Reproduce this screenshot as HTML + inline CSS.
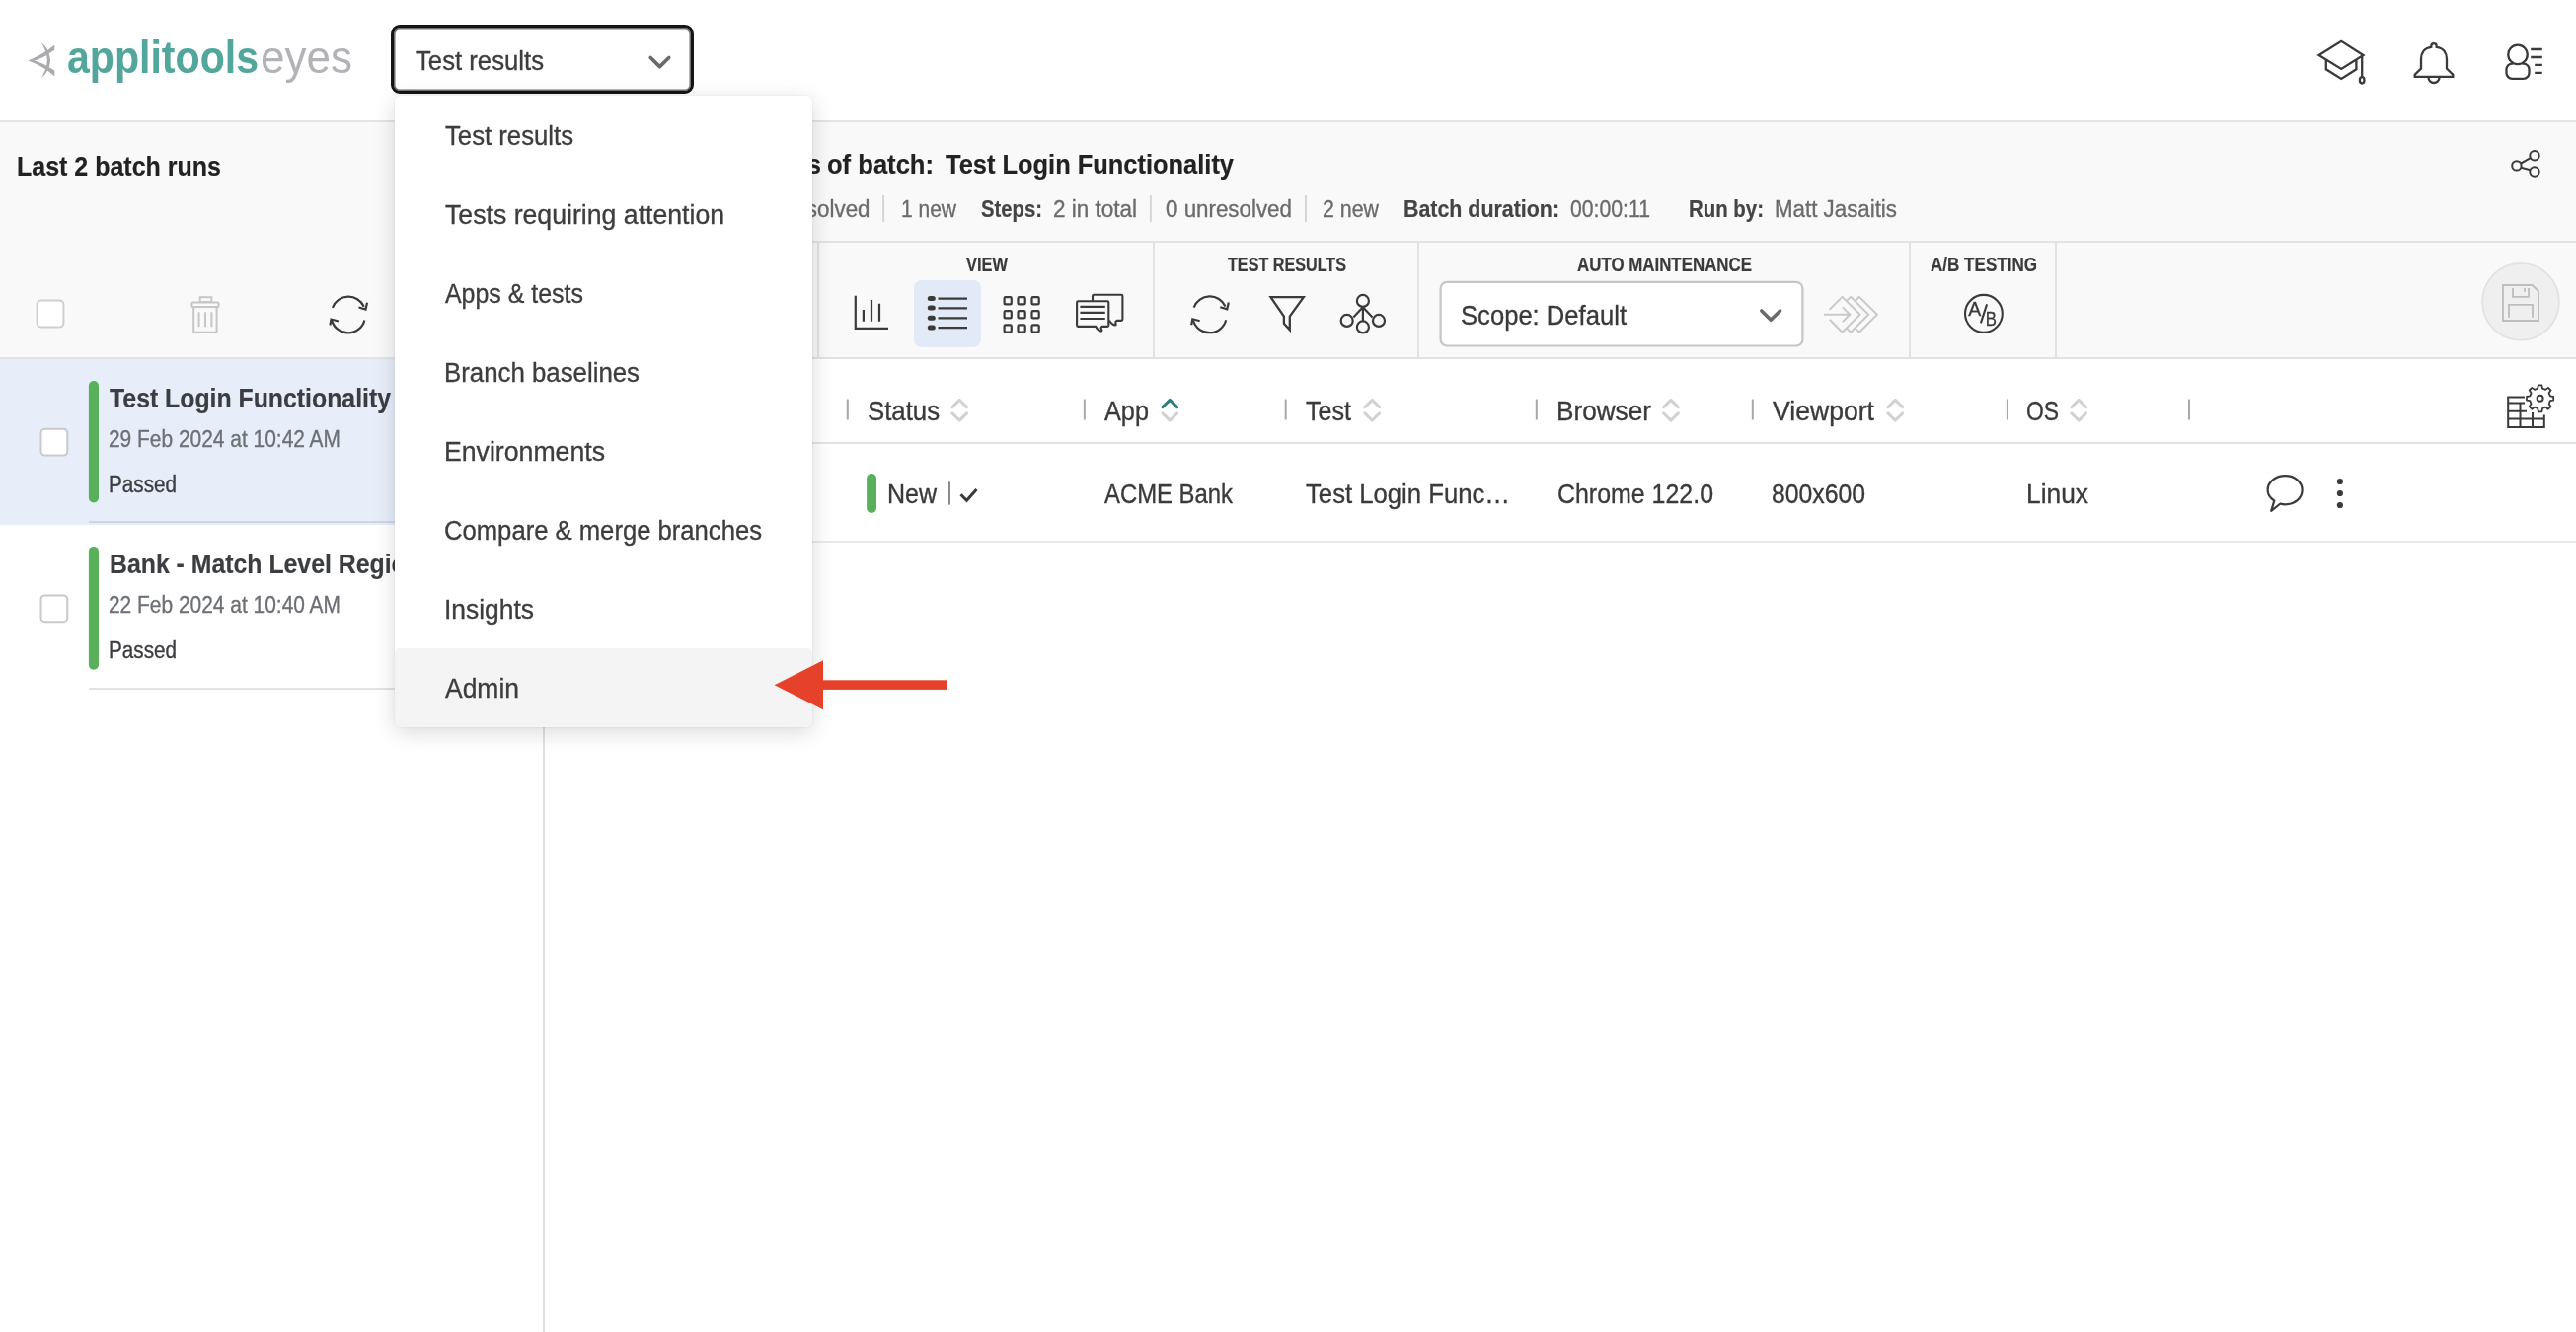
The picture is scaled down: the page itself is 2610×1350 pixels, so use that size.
<!DOCTYPE html>
<html><head><meta charset="utf-8"><title>Applitools Eyes</title>
<style>
html,body{margin:0;padding:0;}
body{width:2610px;height:1350px;position:relative;overflow:hidden;background:#fff;font-family:"Liberation Sans",sans-serif;}
.a{position:absolute;}
svg.full{position:absolute;left:0;top:0;width:2610px;height:1350px;will-change:transform;font-family:"Liberation Sans",sans-serif;}
</style></head><body>
<!-- header -->
<div class="a" style="left:0;top:0;width:2610px;height:122px;background:#fff"></div>
<div class="a" style="left:0;top:122px;width:2610px;height:2px;background:#e3e3e3"></div>
<!-- left panel -->
<div class="a" style="left:0;top:124px;width:550px;height:238px;background:#f9f9f9"></div>
<div class="a" style="left:0;top:362px;width:550px;height:2px;background:#e2e2e2"></div>
<div class="a" style="left:0;top:364px;width:550px;height:168px;background:#e7eefa"></div>
<div class="a" style="left:90px;top:528px;width:460px;height:2px;background:#cfd6e2"></div>
<div class="a" style="left:90px;top:697px;width:460px;height:2px;background:#e2e2e2"></div>
<div class="a" style="left:550px;top:124px;width:2px;height:1226px;background:#e0e0e0"></div>
<!-- main header -->
<div class="a" style="left:552px;top:124px;width:2058px;height:238px;background:#f9f9f9"></div>
<div class="a" style="left:552px;top:244px;width:2058px;height:2px;background:#e2e2e2"></div>
<div class="a" style="left:552px;top:362px;width:2058px;height:2px;background:#e2e2e2"></div>
<div class="a" style="left:828px;top:246px;width:2px;height:116px;background:#e2e2e2"></div>
<div class="a" style="left:1168px;top:246px;width:2px;height:116px;background:#e2e2e2"></div>
<div class="a" style="left:1436px;top:246px;width:2px;height:116px;background:#e2e2e2"></div>
<div class="a" style="left:1934px;top:246px;width:2px;height:116px;background:#e2e2e2"></div>
<div class="a" style="left:2082px;top:246px;width:2px;height:116px;background:#e2e2e2"></div>
<div class="a" style="left:926px;top:284px;width:68px;height:68px;border-radius:8px;background:#e3eaf7"></div>
<!-- table -->
<div class="a" style="left:552px;top:448px;width:2058px;height:2px;background:#e4e4e4"></div>
<div class="a" style="left:552px;top:548px;width:2058px;height:2px;background:#e9e9e9"></div>
<!-- dropdown button -->
<div class="a" style="left:396px;top:25px;width:301px;height:64px;border:3px solid #151515;border-radius:9px;background:#fff;box-shadow:inset 0 0 0 1.5px #6f6f6f"></div>
<svg class="full">

<!-- logo mark -->
<g fill="#a9abaf">
 <path d="M28.3,61.4 C35,58.5 42,55.5 48,51 C51,48.5 53.5,47 55.3,45.4 L55.3,50.8 C52,53 49,55 46.5,56.5 C42,59 38,60.6 34.8,61.4 C38.5,62.3 42.5,64 46.5,66.3 C49.5,68 52.5,70 55.3,71.4 L55.3,77.3 C53,75.5 50.5,73.5 48,71.5 C42,67 35,64 28.3,61.4 Z"/>
 <path d="M41.8,43 C46,46.5 50.5,52 51,61.2 C50.5,70.5 46,75.5 41.8,79.2 C44.5,74.5 47.5,69 47.8,61.2 C47.5,53.5 44.5,48 41.8,43 Z"/>
</g>
<!-- button chevron -->
<path d="M659.2,58.5 L668.5,67.6 L677.8,58.5" fill="none" stroke="#6a6a6a" stroke-width="3.6" stroke-linecap="round" stroke-linejoin="round"/>
<!-- grad cap -->
<g fill="none" stroke="#3a3a3a" stroke-width="2.3" stroke-linejoin="miter">
 <path d="M2349.5,56 L2372.2,41.8 L2394.5,56 L2372.2,69.9 Z"/>
 <path d="M2356.8,61 V70.3 L2372.2,79.9 L2387.4,70.3 V61"/>
 <path d="M2393.2,56.5 V77.5"/>
 <ellipse cx="2393.2" cy="81.3" rx="2.3" ry="3.2"/>
</g>
<!-- bell -->
<g fill="none" stroke="#3a3a3a" stroke-width="2.3" stroke-linejoin="miter">
 <path d="M2463.3,47.8 V46.9 A2.7,2.7 0 0 1 2468.7,46.9 V47.8 C2476,48.5 2479,54 2479,60 V69.5 L2485.3,75.8 V77.9 H2446.7 V75.8 L2453,69.5 V60 C2453,54 2456,48.5 2463.3,47.8 Z"/>
 <path d="M2460.5,78.5 A5.5,5.5 0 0 0 2471.5,78.5"/>
</g>
<!-- user -->
<g fill="none" stroke="#3a3a3a" stroke-width="2.3">
 <circle cx="2551" cy="55.4" r="9.7"/>
 <path d="M2546.3,64.6 H2545.3 A5.8,5.8 0 0 0 2539.5,70.4 V74 A5.8,5.8 0 0 0 2545.3,79.8 H2556.7 A5.8,5.8 0 0 0 2562.5,74 V70.4 A5.8,5.8 0 0 0 2556.7,64.6 H2555.7"/>
 <path d="M2564.2,50 H2575.8 M2564.2,58 H2575.8 M2568.2,65.8 H2575.8 M2568.2,73.9 H2575.8"/>
</g>
<!-- share -->
<g fill="none" stroke="#3a3a3a" stroke-width="2">
 <circle cx="2549.9" cy="167.9" r="4.7"/>
 <circle cx="2568" cy="157.8" r="4.7"/>
 <circle cx="2568" cy="174" r="4.7"/>
 <path d="M2554.2,165.5 L2563.8,160.2 M2554.3,169.8 L2563.6,172.3"/>
</g>
<!-- left toolbar: checkbox, trash, refresh -->
<rect x="37.6" y="304.6" width="26.8" height="26.8" rx="4" fill="#fff" stroke="#cfcfcf" stroke-width="2"/>
<g fill="none" stroke="#c6c6c6" stroke-width="2">
 <rect x="202.7" y="301.2" width="11.6" height="4.8"/>
 <rect x="194.4" y="306.6" width="27.2" height="4.4" rx="1"/>
 <path d="M196.2,311.5 V336.8 H219.6 V311.5"/>
 <path d="M201.6,316.2 V331.2 M208,316.2 V331.2 M214.4,316.2 V331.2"/>
</g>
<g fill="none" stroke="#3a3a3a" stroke-width="2.2" transform="translate(353.2,317.9)">
 <path d="M-16.3,-6 A17.2,17.2 0 0 1 15.5,-7.2"/>
 <path d="M16.2,6.6 A17.2,17.2 0 0 1 -17,7"/>
 <path d="M10.3,-6.4 L17.3,-4.4 L18.8,-11.1"/>
 <path d="M-10.3,7.6 L-17.7,5.6 L-18.8,11.6"/>
</g><g fill="none" stroke="#3a3a3a" stroke-width="2.2" transform="translate(1226,317.7)">
 <path d="M-16.3,-6 A17.2,17.2 0 0 1 15.5,-7.2"/>
 <path d="M16.2,6.6 A17.2,17.2 0 0 1 -17,7"/>
 <path d="M10.3,-6.4 L17.3,-4.4 L18.8,-11.1"/>
 <path d="M-10.3,7.6 L-17.7,5.6 L-18.8,11.6"/>
</g>
<!-- bar chart -->
<g fill="none" stroke="#3a3a3a" stroke-width="2.2">
 <path d="M866.8,299.8 V332.8 H900"/>
 <path d="M874.9,314 V325.8 M883,303.9 V325.8 M891,307.7 V325.8"/>
</g>
<!-- list -->
<g fill="none" stroke="#3a3a3a" stroke-width="2.2">
 <path d="M950.5,302.6 H980 M950.5,312.3 H980 M950.5,322.3 H980 M950.5,332.2 H980"/>
</g>
<g fill="#3a3a3a">
 <rect x="939.8" y="299.9" width="8" height="5" rx="2.5"/>
 <rect x="939.8" y="309.6" width="8" height="5" rx="2.5"/>
 <rect x="939.8" y="319.7" width="8" height="5" rx="2.5"/>
 <rect x="939.8" y="329.6" width="8" height="5" rx="2.5"/>
</g>
<!-- grid -->
<g fill="none" stroke="#3a3a3a" stroke-width="2.2">
 <rect x="1017.6" y="301.2" width="7.2" height="7.2" rx="1.2"/>
 <rect x="1017.6" y="315.2" width="7.2" height="7.2" rx="1.2"/>
 <rect x="1017.6" y="329.3" width="7.2" height="7.2" rx="1.2"/>
 <rect x="1031.5" y="301.2" width="7.2" height="7.2" rx="1.2"/>
 <rect x="1031.5" y="315.2" width="7.2" height="7.2" rx="1.2"/>
 <rect x="1031.5" y="329.3" width="7.2" height="7.2" rx="1.2"/>
 <rect x="1045.5" y="301.2" width="7.2" height="7.2" rx="1.2"/>
 <rect x="1045.5" y="315.2" width="7.2" height="7.2" rx="1.2"/>
 <rect x="1045.5" y="329.3" width="7.2" height="7.2" rx="1.2"/>
</g>
<!-- comments -->
<g fill="none" stroke="#3a3a3a" stroke-width="2.1" stroke-linejoin="round">
 <path d="M1107,304.8 V300 Q1107,298.7 1108.3,298.7 H1136.1 Q1137.4,298.7 1137.4,300 V323.6 Q1137.4,324.9 1136.1,324.9 H1131.5 Q1129.7,325.5 1130.6,328.2 Q1131,329.8 1129.4,329.4 Q1126,328.6 1124,324.6"/>
 <path d="M1092.4,305.3 H1122 Q1123.3,305.3 1123.3,306.6 V329.6 Q1123.3,330.9 1122,330.9 H1116.6 Q1114.8,331.6 1116.3,334.3 Q1116.8,335.8 1115.2,335.5 Q1112,335 1110.2,330.9 H1092.4 Q1091.1,330.9 1091.1,329.6 V306.6 Q1091.1,305.3 1092.4,305.3 Z"/>
 <path d="M1094.4,310.9 H1119.8 M1094.4,316.9 H1119.8 M1094.4,323 H1119.8"/>
</g>
<!-- funnel -->
<path d="M1287.5,301.2 H1320.8 L1306.8,320.6 V334.2 L1300.9,327.8 V320.6 Z" fill="none" stroke="#3a3a3a" stroke-width="2.3" stroke-linejoin="miter"/>
<!-- tree -->
<g fill="none" stroke="#3a3a3a" stroke-width="2.2">
 <circle cx="1380.9" cy="304.9" r="6"/>
 <circle cx="1364.7" cy="324.9" r="6"/>
 <circle cx="1380.9" cy="331.4" r="6"/>
 <circle cx="1397" cy="324.9" r="6"/>
 <path d="M1380.9,311 V325.4 M1380.9,311.2 L1371.3,321.5 M1380.9,311.2 L1390.5,321.5"/>
</g>
<!-- scope box -->
<rect x="1459.6" y="285.9" width="366.8" height="64.6" rx="6.5" fill="#fff" stroke="#c6c6c6" stroke-width="2.2"/>
<path d="M1784.8,315 L1794.2,324.2 L1803.6,315" fill="none" stroke="#6a6a6a" stroke-width="3.6" stroke-linecap="round" stroke-linejoin="round"/>
<!-- triple arrow -->
<g fill="none" stroke="#c9c9c9" stroke-width="2">
 <path d="M1853.7,313.8 L1866.6,300.8 L1884.6,318.8 L1866.6,336.8 L1853.7,323.8"/>
 <path d="M1871.1,304.7 L1875.2,300.8 L1893.2,318.8 L1875.2,336.8 L1871.1,332.9"/>
 <path d="M1880,304.7 L1883.9,300.8 L1901.9,318.8 L1883.9,336.8 L1880,332.9"/>
 <path d="M1848,318.8 H1874.3 M1866.8,311.4 L1874.3,318.8 L1866.8,326.2"/>
</g>
<!-- A/B -->
<circle cx="2009.9" cy="317.8" r="18.9" fill="none" stroke="#3a3a3a" stroke-width="2.1"/>
<text x="1994.3" y="319.6" font-size="19.6" fill="#3a3a3a" stroke="#3a3a3a" stroke-width="0.3" textLength="13" lengthAdjust="spacingAndGlyphs">A</text>
<path d="M2006.9,327.4 L2013.1,308.4" stroke="#3a3a3a" stroke-width="2.1"/>
<text x="2011.8" y="329.8" font-size="19.6" fill="#3a3a3a" stroke="#3a3a3a" stroke-width="0.3" textLength="11.2" lengthAdjust="spacingAndGlyphs">B</text>
<!-- save -->
<circle cx="2554" cy="305.8" r="38.9" fill="#efefef" stroke="#e2e2e2" stroke-width="1.8"/>
<g fill="none" stroke="#bdbdbd" stroke-width="1.8">
 <path d="M2536,289 H2565.6 L2572,295.1 V325 H2536 Z"/>
 <path d="M2546,292 V300.8 H2562 V292 M2558,292 V295.8"/>
 <path d="M2542,321.8 V308.8 H2566 V321.8"/>
</g>
<rect x="894.1" y="198" width="2" height="27" fill="#d6d6d6"/>
<rect x="1164.9" y="198" width="2" height="27" fill="#d6d6d6"/>
<rect x="1322" y="198" width="2" height="27" fill="#d6d6d6"/>
<rect x="857.8" y="404.5" width="2" height="21" fill="#a8a8a8"/>
<rect x="1097.9" y="404.5" width="2" height="21" fill="#a8a8a8"/>
<rect x="1301.7" y="404.5" width="2" height="21" fill="#a8a8a8"/>
<rect x="1555.8" y="404.5" width="2" height="21" fill="#a8a8a8"/>
<rect x="1774.8" y="404.5" width="2" height="21" fill="#a8a8a8"/>
<rect x="2032.9" y="404.5" width="2" height="21" fill="#a8a8a8"/>
<rect x="2217" y="404.5" width="2" height="21" fill="#a8a8a8"/>
<path d="M964.8000000000001,412.6 L972.2,405.4 L979.6,412.6" fill="none" stroke="#d2d2d2" stroke-width="3" stroke-linecap="round" stroke-linejoin="round"/><path d="M964.8000000000001,418.9 L972.2,426.1 L979.6,418.9" fill="none" stroke="#d2d2d2" stroke-width="3" stroke-linecap="round" stroke-linejoin="round"/>
<path d="M1177.8999999999999,412.6 L1185.3,405.4 L1192.7,412.6" fill="none" stroke="#2e7f79" stroke-width="3" stroke-linecap="round" stroke-linejoin="round"/><path d="M1177.8999999999999,418.9 L1185.3,426.1 L1192.7,418.9" fill="none" stroke="#d2d2d2" stroke-width="3" stroke-linecap="round" stroke-linejoin="round"/>
<path d="M1382.8999999999999,412.6 L1390.3,405.4 L1397.7,412.6" fill="none" stroke="#d2d2d2" stroke-width="3" stroke-linecap="round" stroke-linejoin="round"/><path d="M1382.8999999999999,418.9 L1390.3,426.1 L1397.7,418.9" fill="none" stroke="#d2d2d2" stroke-width="3" stroke-linecap="round" stroke-linejoin="round"/>
<path d="M1685.6,412.6 L1693,405.4 L1700.4,412.6" fill="none" stroke="#d2d2d2" stroke-width="3" stroke-linecap="round" stroke-linejoin="round"/><path d="M1685.6,418.9 L1693,426.1 L1700.4,418.9" fill="none" stroke="#d2d2d2" stroke-width="3" stroke-linecap="round" stroke-linejoin="round"/>
<path d="M1912.8999999999999,412.6 L1920.3,405.4 L1927.7,412.6" fill="none" stroke="#d2d2d2" stroke-width="3" stroke-linecap="round" stroke-linejoin="round"/><path d="M1912.8999999999999,418.9 L1920.3,426.1 L1927.7,418.9" fill="none" stroke="#d2d2d2" stroke-width="3" stroke-linecap="round" stroke-linejoin="round"/>
<path d="M2098.7999999999997,412.6 L2106.2,405.4 L2113.6,412.6" fill="none" stroke="#d2d2d2" stroke-width="3" stroke-linecap="round" stroke-linejoin="round"/><path d="M2098.7999999999997,418.9 L2106.2,426.1 L2113.6,418.9" fill="none" stroke="#d2d2d2" stroke-width="3" stroke-linecap="round" stroke-linejoin="round"/>

<!-- row -->
<rect x="878.1" y="480" width="9.9" height="40" rx="4.9" fill="#58b05a"/>
<rect x="961" y="488.3" width="2" height="23.3" fill="#8a8a8a"/>
<path d="M973.5,501.2 L979.5,507.2 L989.5,496" fill="none" stroke="#3a3a3a" stroke-width="3"/>
<!-- comment bubble -->
<path d="M2304.3,507.5 C2299.5,504.5 2297.6,500.5 2297.6,496.8 C2297.6,488.5 2305.5,482.2 2315.5,482.2 C2325,482.2 2332.6,488.5 2332.6,496.8 C2332.6,505 2325,511.3 2315.5,511.3 C2313.5,511.3 2311.8,511 2310.4,510.5 L2301.2,517.8 L2304.3,507.5 Z" fill="none" stroke="#3a3a3a" stroke-width="2.2" stroke-linejoin="round"/>
<circle cx="2370.9" cy="488" r="3.1" fill="#3a3a3a"/>
<circle cx="2370.9" cy="500" r="3.1" fill="#3a3a3a"/>
<circle cx="2370.9" cy="512" r="3.1" fill="#3a3a3a"/>
<!-- grid settings -->
<g fill="none" stroke="#3a3a3a" stroke-width="2">
 <path d="M2558,402.5 H2541.2 V433 H2577.8 V420.5"/>
 <path d="M2541.2,408.6 H2558 M2541.2,416.8 H2560 M2541.2,424.5 H2577.8 M2553.5,408.6 V433 M2566,418 V433"/>
</g>
<g transform="translate(2573.6,403.8)">
 <path d="M-1.8,-12 H1.8 L2.4,-8.7 L5.6,-7.4 L8.3,-9.4 L10.9,-6.8 L9,-4 L10.3,-0.9 L13.6,-0.3 V3.3 L10.3,3.9 L9,7 L10.9,9.8 L8.3,12.4 L5.6,10.4 L2.4,11.7 L1.8,15 H-1.8 L-2.4,11.7 L-5.6,10.4 L-8.3,12.4 L-10.9,9.8 L-9,7 L-10.3,3.9 L-13.6,3.3 V-0.3 L-10.3,-0.9 L-9,-4 L-10.9,-6.8 L-8.3,-9.4 L-5.6,-7.4 L-2.4,-8.7 Z" transform="translate(0,-1.5)" fill="#fff" stroke="#3a3a3a" stroke-width="1.8" stroke-linejoin="round"/>
 <circle cx="0" cy="0" r="3" fill="none" stroke="#3a3a3a" stroke-width="2"/>
</g>
<!-- left rows -->
<rect x="41.5" y="434.8" width="26.8" height="26.8" rx="4" fill="#fff" stroke="#c9c9c9" stroke-width="2"/>
<rect x="89.9" y="386" width="10.1" height="123.4" rx="5" fill="#58b05a"/>
<rect x="41.5" y="603.4" width="26.8" height="26.8" rx="4" fill="#fff" stroke="#c9c9c9" stroke-width="2"/>
<rect x="89.9" y="553.9" width="10.1" height="124.9" rx="5" fill="#58b05a"/>

<text x="67.99" y="73.8" font-size="46.62" font-weight="bold" fill="#52a69b" textLength="194.02" lengthAdjust="spacingAndGlyphs">applitools</text>
<text x="263.96" y="73.8" font-size="46.98" font-weight="normal" fill="#b2b3b7" textLength="93.06" lengthAdjust="spacingAndGlyphs">eyes</text>
<text x="421.00" y="71.1" font-size="27.10" font-weight="normal" fill="#3d3d3d" stroke="#3d3d3d" stroke-width="0.35" textLength="130.00" lengthAdjust="spacingAndGlyphs">Test results</text>
<text x="16.99" y="178.2" font-size="28.26" font-weight="bold" fill="#222222" stroke="#222222" stroke-width="0.2" textLength="207.02" lengthAdjust="spacingAndGlyphs">Last 2 batch runs</text>
<text x="111.00" y="413.1" font-size="27.68" font-weight="bold" fill="#3b3d40" stroke="#3b3d40" stroke-width="0.2" textLength="285.01" lengthAdjust="spacingAndGlyphs">Test Login Functionality</text>
<text x="109.99" y="452.9" font-size="23.04" font-weight="normal" fill="#6d7075" stroke="#6d7075" stroke-width="0.35" textLength="235.01" lengthAdjust="spacingAndGlyphs">29 Feb 2024 at 10:42 AM</text>
<text x="109.98" y="499" font-size="23.91" font-weight="normal" fill="#3b3d40" stroke="#3b3d40" stroke-width="0.35" textLength="69.03" lengthAdjust="spacingAndGlyphs">Passed</text>
<text x="109.99" y="621.2" font-size="23.04" font-weight="normal" fill="#6d7075" stroke="#6d7075" stroke-width="0.35" textLength="235.01" lengthAdjust="spacingAndGlyphs">22 Feb 2024 at 10:40 AM</text>
<text x="109.98" y="666.9" font-size="23.91" font-weight="normal" fill="#3b3d40" stroke="#3b3d40" stroke-width="0.35" textLength="69.03" lengthAdjust="spacingAndGlyphs">Passed</text>
<text x="837.99" y="176.2" font-size="27.54" font-weight="bold" fill="#222222" stroke="#222222" stroke-width="0.2" textLength="108.05" lengthAdjust="spacingAndGlyphs">of batch:</text>
<text x="958.00" y="176.2" font-size="27.54" font-weight="bold" fill="#222222" stroke="#222222" stroke-width="0.2" textLength="292.00" lengthAdjust="spacingAndGlyphs">Test Login Functionality</text>
<text x="912.97" y="219.7" font-size="23.04" font-weight="normal" fill="#6b6b6b" stroke="#6b6b6b" stroke-width="0.35" textLength="56.05" lengthAdjust="spacingAndGlyphs">1 new</text>
<text x="994.00" y="219.7" font-size="23.04" font-weight="bold" fill="#444444" stroke="#444444" stroke-width="0.2" textLength="62.03" lengthAdjust="spacingAndGlyphs">Steps:</text>
<text x="1066.97" y="219.7" font-size="23.04" font-weight="normal" fill="#6b6b6b" stroke="#6b6b6b" stroke-width="0.35" textLength="85.05" lengthAdjust="spacingAndGlyphs">2 in total</text>
<text x="1180.99" y="219.7" font-size="23.04" font-weight="normal" fill="#6b6b6b" stroke="#6b6b6b" stroke-width="0.35" textLength="128.01" lengthAdjust="spacingAndGlyphs">0 unresolved</text>
<text x="1339.99" y="219.7" font-size="23.04" font-weight="normal" fill="#6b6b6b" stroke="#6b6b6b" stroke-width="0.35" textLength="57.02" lengthAdjust="spacingAndGlyphs">2 new</text>
<text x="1421.99" y="219.7" font-size="23.04" font-weight="bold" fill="#444444" stroke="#444444" stroke-width="0.2" textLength="158.04" lengthAdjust="spacingAndGlyphs">Batch duration:</text>
<text x="1590.98" y="219.7" font-size="23.04" font-weight="normal" fill="#6b6b6b" stroke="#6b6b6b" stroke-width="0.35" textLength="81.03" lengthAdjust="spacingAndGlyphs">00:00:11</text>
<text x="1710.98" y="219.7" font-size="23.04" font-weight="bold" fill="#444444" stroke="#444444" stroke-width="0.2" textLength="76.04" lengthAdjust="spacingAndGlyphs">Run by:</text>
<text x="1797.98" y="219.7" font-size="23.04" font-weight="normal" fill="#6b6b6b" stroke="#6b6b6b" stroke-width="0.35" textLength="124.02" lengthAdjust="spacingAndGlyphs">Matt Jasaitis</text>
<text x="978.96" y="275.1" font-size="19.57" font-weight="bold" fill="#3a3a3a" stroke="#3a3a3a" stroke-width="0.2" textLength="42.07" lengthAdjust="spacingAndGlyphs">VIEW</text>
<text x="1243.99" y="275.1" font-size="19.57" font-weight="bold" fill="#3a3a3a" stroke="#3a3a3a" stroke-width="0.2" textLength="120.02" lengthAdjust="spacingAndGlyphs">TEST RESULTS</text>
<text x="1597.99" y="275.1" font-size="19.57" font-weight="bold" fill="#3a3a3a" stroke="#3a3a3a" stroke-width="0.2" textLength="177.01" lengthAdjust="spacingAndGlyphs">AUTO MAINTENANCE</text>
<text x="1955.99" y="275.1" font-size="19.57" font-weight="bold" fill="#3a3a3a" stroke="#3a3a3a" stroke-width="0.2" textLength="108.02" lengthAdjust="spacingAndGlyphs">A/B TESTING</text>
<text x="1480.00" y="328.6" font-size="27.97" font-weight="normal" fill="#3a3a3a" stroke="#3a3a3a" stroke-width="0.35" textLength="168.01" lengthAdjust="spacingAndGlyphs">Scope: Default</text>
<text x="878.97" y="425.5" font-size="26.96" font-weight="normal" fill="#3a3a3a" stroke="#3a3a3a" stroke-width="0.35" textLength="73.05" lengthAdjust="spacingAndGlyphs">Status</text>
<text x="1119.00" y="425.5" font-size="26.96" font-weight="normal" fill="#3a3a3a" stroke="#3a3a3a" stroke-width="0.35" textLength="45.02" lengthAdjust="spacingAndGlyphs">App</text>
<text x="1322.99" y="425.5" font-size="26.96" font-weight="normal" fill="#3a3a3a" stroke="#3a3a3a" stroke-width="0.35" textLength="46.03" lengthAdjust="spacingAndGlyphs">Test</text>
<text x="1576.96" y="425.5" font-size="26.96" font-weight="normal" fill="#3a3a3a" stroke="#3a3a3a" stroke-width="0.35" textLength="96.05" lengthAdjust="spacingAndGlyphs">Browser</text>
<text x="1795.98" y="425.5" font-size="26.96" font-weight="normal" fill="#3a3a3a" stroke="#3a3a3a" stroke-width="0.35" textLength="103.03" lengthAdjust="spacingAndGlyphs">Viewport</text>
<text x="2052.95" y="425.5" font-size="26.96" font-weight="normal" fill="#3a3a3a" stroke="#3a3a3a" stroke-width="0.35" textLength="33.09" lengthAdjust="spacingAndGlyphs">OS</text>
<text x="898.98" y="510.1" font-size="27.54" font-weight="normal" fill="#3a3a3a" stroke="#3a3a3a" stroke-width="0.35" textLength="50.05" lengthAdjust="spacingAndGlyphs">New</text>
<text x="1119.00" y="510.1" font-size="27.54" font-weight="normal" fill="#3a3a3a" stroke="#3a3a3a" stroke-width="0.35" textLength="130.01" lengthAdjust="spacingAndGlyphs">ACME Bank</text>
<text x="1323.00" y="510.1" font-size="27.54" font-weight="normal" fill="#3a3a3a" stroke="#3a3a3a" stroke-width="0.35" textLength="207.04" lengthAdjust="spacingAndGlyphs">Test Login Func…</text>
<text x="1578.00" y="510.1" font-size="27.54" font-weight="normal" fill="#3a3a3a" stroke="#3a3a3a" stroke-width="0.35" textLength="158.01" lengthAdjust="spacingAndGlyphs">Chrome 122.0</text>
<text x="1794.98" y="510.1" font-size="27.54" font-weight="normal" fill="#3a3a3a" stroke="#3a3a3a" stroke-width="0.35" textLength="95.02" lengthAdjust="spacingAndGlyphs">800x600</text>
<text x="2052.98" y="510.1" font-size="27.54" font-weight="normal" fill="#3a3a3a" stroke="#3a3a3a" stroke-width="0.35" textLength="63.02" lengthAdjust="spacingAndGlyphs">Linux</text>
<text x="111.00" y="581.4" font-size="27.68" font-weight="bold" fill="#3b3d40" stroke="#3b3d40" stroke-width="0.2" textLength="329.69" lengthAdjust="spacingAndGlyphs">Bank - Match Level Regions</text>
<text x="772.13" y="219.7" font-size="23.04" font-weight="normal" fill="#6b6b6b" stroke="#6b6b6b" stroke-width="0.35" textLength="109.37" lengthAdjust="spacingAndGlyphs">unresolved</text>
<text x="767.04" y="176.2" font-size="27.54" font-weight="bold" fill="#222222" stroke="#222222" stroke-width="0.2" textLength="64.96" lengthAdjust="spacingAndGlyphs">Tests</text>
</svg>
<!-- dropdown menu -->
<div class="a" style="left:400px;top:97px;width:423px;height:640px;background:#fff;border-radius:6px;box-shadow:0 5px 22px rgba(0,0,0,0.15),0 0 3px rgba(0,0,0,0.08);overflow:hidden">
 <div class="a" style="left:0;top:560px;width:423px;height:80px;background:#f4f4f4;border-radius:5px"></div>
</div>
<svg class="full">
<text x="451.00" y="146.9" font-size="27.39" font-weight="normal" fill="#3d3d3d" stroke="#3d3d3d" stroke-width="0.35" textLength="130.01" lengthAdjust="spacingAndGlyphs">Test results</text>
<text x="451.00" y="227.3" font-size="27.39" font-weight="normal" fill="#3d3d3d" stroke="#3d3d3d" stroke-width="0.35" textLength="283.11" lengthAdjust="spacingAndGlyphs">Tests requiring attention</text>
<text x="450.99" y="307.1" font-size="27.39" font-weight="normal" fill="#3d3d3d" stroke="#3d3d3d" stroke-width="0.35" textLength="140.01" lengthAdjust="spacingAndGlyphs">Apps &amp; tests</text>
<text x="449.98" y="387.2" font-size="27.39" font-weight="normal" fill="#3d3d3d" stroke="#3d3d3d" stroke-width="0.35" textLength="198.04" lengthAdjust="spacingAndGlyphs">Branch baselines</text>
<text x="449.97" y="466.5" font-size="27.39" font-weight="normal" fill="#3d3d3d" stroke="#3d3d3d" stroke-width="0.35" textLength="163.05" lengthAdjust="spacingAndGlyphs">Environments</text>
<text x="450.00" y="547.1" font-size="27.39" font-weight="normal" fill="#3d3d3d" stroke="#3d3d3d" stroke-width="0.35" textLength="322.01" lengthAdjust="spacingAndGlyphs">Compare &amp; merge branches</text>
<text x="449.97" y="627.2" font-size="27.39" font-weight="normal" fill="#3d3d3d" stroke="#3d3d3d" stroke-width="0.35" textLength="91.03" lengthAdjust="spacingAndGlyphs">Insights</text>
<text x="450.99" y="706.5" font-size="27.39" font-weight="normal" fill="#3d3d3d" stroke="#3d3d3d" stroke-width="0.35" textLength="75.01" lengthAdjust="spacingAndGlyphs">Admin</text>
<path d="M784.6,694.2 L834,669.2 L834,719.2 Z" fill="#e5412b"/>
<rect x="833" y="689.3" width="127" height="9.6" fill="#e5412b"/>
</svg>
</body></html>
